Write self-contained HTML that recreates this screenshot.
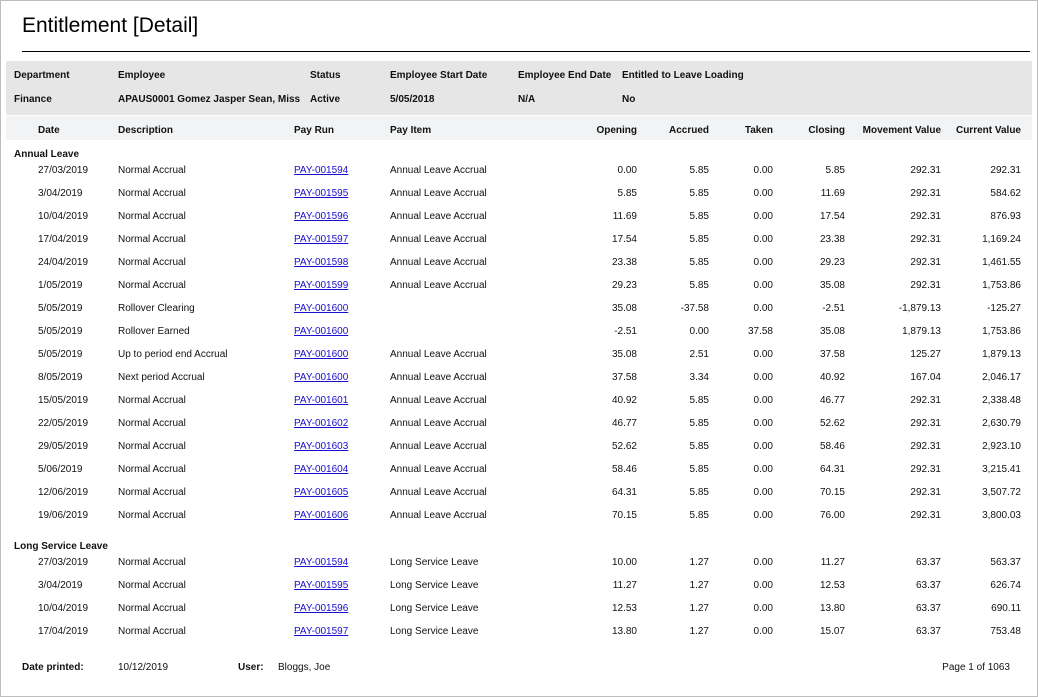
<!DOCTYPE html>
<html><head><meta charset="utf-8"><style>
*{margin:0;padding:0;box-sizing:border-box}
body{width:1038px;height:697px;background:#fff;font-family:"Liberation Sans",Arial,sans-serif;color:#111;font-size:10px;position:relative;overflow:hidden}
.frame{position:absolute;left:0;top:0;width:1038px;height:697px;border:1px solid #bdbdbd}
h1{position:absolute;left:22px;top:14px;font-size:21px;font-weight:normal;color:#000}
.rule{position:absolute;left:22px;top:51px;width:1008px;height:1px;background:#000}
.band{position:absolute;left:6px;top:61px;width:1026px;height:54px;background:#e6e6e6}
.hdr{position:absolute;left:6px;top:116px;width:1026px;height:24px;background:#f2f3f4}
.r{position:absolute;left:0;width:1038px;height:12px;line-height:12px;margin-top:2px}
.r span{position:absolute;white-space:nowrap}
.b{font-weight:bold}
.c1{left:38px}.c2{left:118px}.c3{left:294px}.c4{left:390px}
.n1{right:401px}.n2{right:329px}.n3{right:265px}.n4{right:193px}.n5{right:97px}.n6{right:17px}
a{color:#1a0dcc;text-decoration:underline}
</style></head><body>
<div class="frame"></div>
<h1>Entitlement [Detail]</h1>
<div class="rule"></div>
<div class="band"></div>
<div class="hdr"></div>
<div class="r b" style="top:68px"><span style="left:14px">Department</span><span class="c2">Employee</span><span style="left:310px">Status</span><span class="c4">Employee Start Date</span><span style="left:518px">Employee End Date</span><span style="left:622px">Entitled to Leave Loading</span></div>
<div class="r b" style="top:92px"><span style="left:14px">Finance</span><span class="c2">APAUS0001 Gomez Jasper Sean, Miss</span><span style="left:310px">Active</span><span class="c4">5/05/2018</span><span style="left:518px">N/A</span><span style="left:622px">No</span></div>
<div class="r b" style="top:123px"><span class="c1">Date</span><span class="c2">Description</span><span class="c3">Pay Run</span><span class="c4">Pay Item</span><span class="n1">Opening</span><span class="n2">Accrued</span><span class="n3">Taken</span><span class="n4">Closing</span><span class="n5">Movement Value</span><span class="n6">Current Value</span></div>
<div class="r b" style="top:147px"><span style="left:14px">Annual Leave</span></div>
<div class="r" style="top:163px"><span class="c1">27/03/2019</span><span class="c2">Normal Accrual</span><span class="c3"><a>PAY-001594</a></span><span class="c4">Annual Leave Accrual</span><span class="n1">0.00</span><span class="n2">5.85</span><span class="n3">0.00</span><span class="n4">5.85</span><span class="n5">292.31</span><span class="n6">292.31</span></div>
<div class="r" style="top:186px"><span class="c1">3/04/2019</span><span class="c2">Normal Accrual</span><span class="c3"><a>PAY-001595</a></span><span class="c4">Annual Leave Accrual</span><span class="n1">5.85</span><span class="n2">5.85</span><span class="n3">0.00</span><span class="n4">11.69</span><span class="n5">292.31</span><span class="n6">584.62</span></div>
<div class="r" style="top:209px"><span class="c1">10/04/2019</span><span class="c2">Normal Accrual</span><span class="c3"><a>PAY-001596</a></span><span class="c4">Annual Leave Accrual</span><span class="n1">11.69</span><span class="n2">5.85</span><span class="n3">0.00</span><span class="n4">17.54</span><span class="n5">292.31</span><span class="n6">876.93</span></div>
<div class="r" style="top:232px"><span class="c1">17/04/2019</span><span class="c2">Normal Accrual</span><span class="c3"><a>PAY-001597</a></span><span class="c4">Annual Leave Accrual</span><span class="n1">17.54</span><span class="n2">5.85</span><span class="n3">0.00</span><span class="n4">23.38</span><span class="n5">292.31</span><span class="n6">1,169.24</span></div>
<div class="r" style="top:255px"><span class="c1">24/04/2019</span><span class="c2">Normal Accrual</span><span class="c3"><a>PAY-001598</a></span><span class="c4">Annual Leave Accrual</span><span class="n1">23.38</span><span class="n2">5.85</span><span class="n3">0.00</span><span class="n4">29.23</span><span class="n5">292.31</span><span class="n6">1,461.55</span></div>
<div class="r" style="top:278px"><span class="c1">1/05/2019</span><span class="c2">Normal Accrual</span><span class="c3"><a>PAY-001599</a></span><span class="c4">Annual Leave Accrual</span><span class="n1">29.23</span><span class="n2">5.85</span><span class="n3">0.00</span><span class="n4">35.08</span><span class="n5">292.31</span><span class="n6">1,753.86</span></div>
<div class="r" style="top:301px"><span class="c1">5/05/2019</span><span class="c2">Rollover Clearing</span><span class="c3"><a>PAY-001600</a></span><span class="n1">35.08</span><span class="n2">-37.58</span><span class="n3">0.00</span><span class="n4">-2.51</span><span class="n5">-1,879.13</span><span class="n6">-125.27</span></div>
<div class="r" style="top:324px"><span class="c1">5/05/2019</span><span class="c2">Rollover Earned</span><span class="c3"><a>PAY-001600</a></span><span class="n1">-2.51</span><span class="n2">0.00</span><span class="n3">37.58</span><span class="n4">35.08</span><span class="n5">1,879.13</span><span class="n6">1,753.86</span></div>
<div class="r" style="top:347px"><span class="c1">5/05/2019</span><span class="c2">Up to period end Accrual</span><span class="c3"><a>PAY-001600</a></span><span class="c4">Annual Leave Accrual</span><span class="n1">35.08</span><span class="n2">2.51</span><span class="n3">0.00</span><span class="n4">37.58</span><span class="n5">125.27</span><span class="n6">1,879.13</span></div>
<div class="r" style="top:370px"><span class="c1">8/05/2019</span><span class="c2">Next period Accrual</span><span class="c3"><a>PAY-001600</a></span><span class="c4">Annual Leave Accrual</span><span class="n1">37.58</span><span class="n2">3.34</span><span class="n3">0.00</span><span class="n4">40.92</span><span class="n5">167.04</span><span class="n6">2,046.17</span></div>
<div class="r" style="top:393px"><span class="c1">15/05/2019</span><span class="c2">Normal Accrual</span><span class="c3"><a>PAY-001601</a></span><span class="c4">Annual Leave Accrual</span><span class="n1">40.92</span><span class="n2">5.85</span><span class="n3">0.00</span><span class="n4">46.77</span><span class="n5">292.31</span><span class="n6">2,338.48</span></div>
<div class="r" style="top:416px"><span class="c1">22/05/2019</span><span class="c2">Normal Accrual</span><span class="c3"><a>PAY-001602</a></span><span class="c4">Annual Leave Accrual</span><span class="n1">46.77</span><span class="n2">5.85</span><span class="n3">0.00</span><span class="n4">52.62</span><span class="n5">292.31</span><span class="n6">2,630.79</span></div>
<div class="r" style="top:439px"><span class="c1">29/05/2019</span><span class="c2">Normal Accrual</span><span class="c3"><a>PAY-001603</a></span><span class="c4">Annual Leave Accrual</span><span class="n1">52.62</span><span class="n2">5.85</span><span class="n3">0.00</span><span class="n4">58.46</span><span class="n5">292.31</span><span class="n6">2,923.10</span></div>
<div class="r" style="top:462px"><span class="c1">5/06/2019</span><span class="c2">Normal Accrual</span><span class="c3"><a>PAY-001604</a></span><span class="c4">Annual Leave Accrual</span><span class="n1">58.46</span><span class="n2">5.85</span><span class="n3">0.00</span><span class="n4">64.31</span><span class="n5">292.31</span><span class="n6">3,215.41</span></div>
<div class="r" style="top:485px"><span class="c1">12/06/2019</span><span class="c2">Normal Accrual</span><span class="c3"><a>PAY-001605</a></span><span class="c4">Annual Leave Accrual</span><span class="n1">64.31</span><span class="n2">5.85</span><span class="n3">0.00</span><span class="n4">70.15</span><span class="n5">292.31</span><span class="n6">3,507.72</span></div>
<div class="r" style="top:508px"><span class="c1">19/06/2019</span><span class="c2">Normal Accrual</span><span class="c3"><a>PAY-001606</a></span><span class="c4">Annual Leave Accrual</span><span class="n1">70.15</span><span class="n2">5.85</span><span class="n3">0.00</span><span class="n4">76.00</span><span class="n5">292.31</span><span class="n6">3,800.03</span></div>
<div class="r b" style="top:539px"><span style="left:14px">Long Service Leave</span></div>
<div class="r" style="top:555px"><span class="c1">27/03/2019</span><span class="c2">Normal Accrual</span><span class="c3"><a>PAY-001594</a></span><span class="c4">Long Service Leave</span><span class="n1">10.00</span><span class="n2">1.27</span><span class="n3">0.00</span><span class="n4">11.27</span><span class="n5">63.37</span><span class="n6">563.37</span></div>
<div class="r" style="top:578px"><span class="c1">3/04/2019</span><span class="c2">Normal Accrual</span><span class="c3"><a>PAY-001595</a></span><span class="c4">Long Service Leave</span><span class="n1">11.27</span><span class="n2">1.27</span><span class="n3">0.00</span><span class="n4">12.53</span><span class="n5">63.37</span><span class="n6">626.74</span></div>
<div class="r" style="top:601px"><span class="c1">10/04/2019</span><span class="c2">Normal Accrual</span><span class="c3"><a>PAY-001596</a></span><span class="c4">Long Service Leave</span><span class="n1">12.53</span><span class="n2">1.27</span><span class="n3">0.00</span><span class="n4">13.80</span><span class="n5">63.37</span><span class="n6">690.11</span></div>
<div class="r" style="top:624px"><span class="c1">17/04/2019</span><span class="c2">Normal Accrual</span><span class="c3"><a>PAY-001597</a></span><span class="c4">Long Service Leave</span><span class="n1">13.80</span><span class="n2">1.27</span><span class="n3">0.00</span><span class="n4">15.07</span><span class="n5">63.37</span><span class="n6">753.48</span></div>
<div class="r" style="top:660px"><span class="b" style="left:22px">Date printed:</span><span class="c2">10/12/2019</span><span class="b" style="left:238px">User:</span><span style="left:278px">Bloggs, Joe</span><span style="right:28px">Page 1 of 1063</span></div>
</body></html>
